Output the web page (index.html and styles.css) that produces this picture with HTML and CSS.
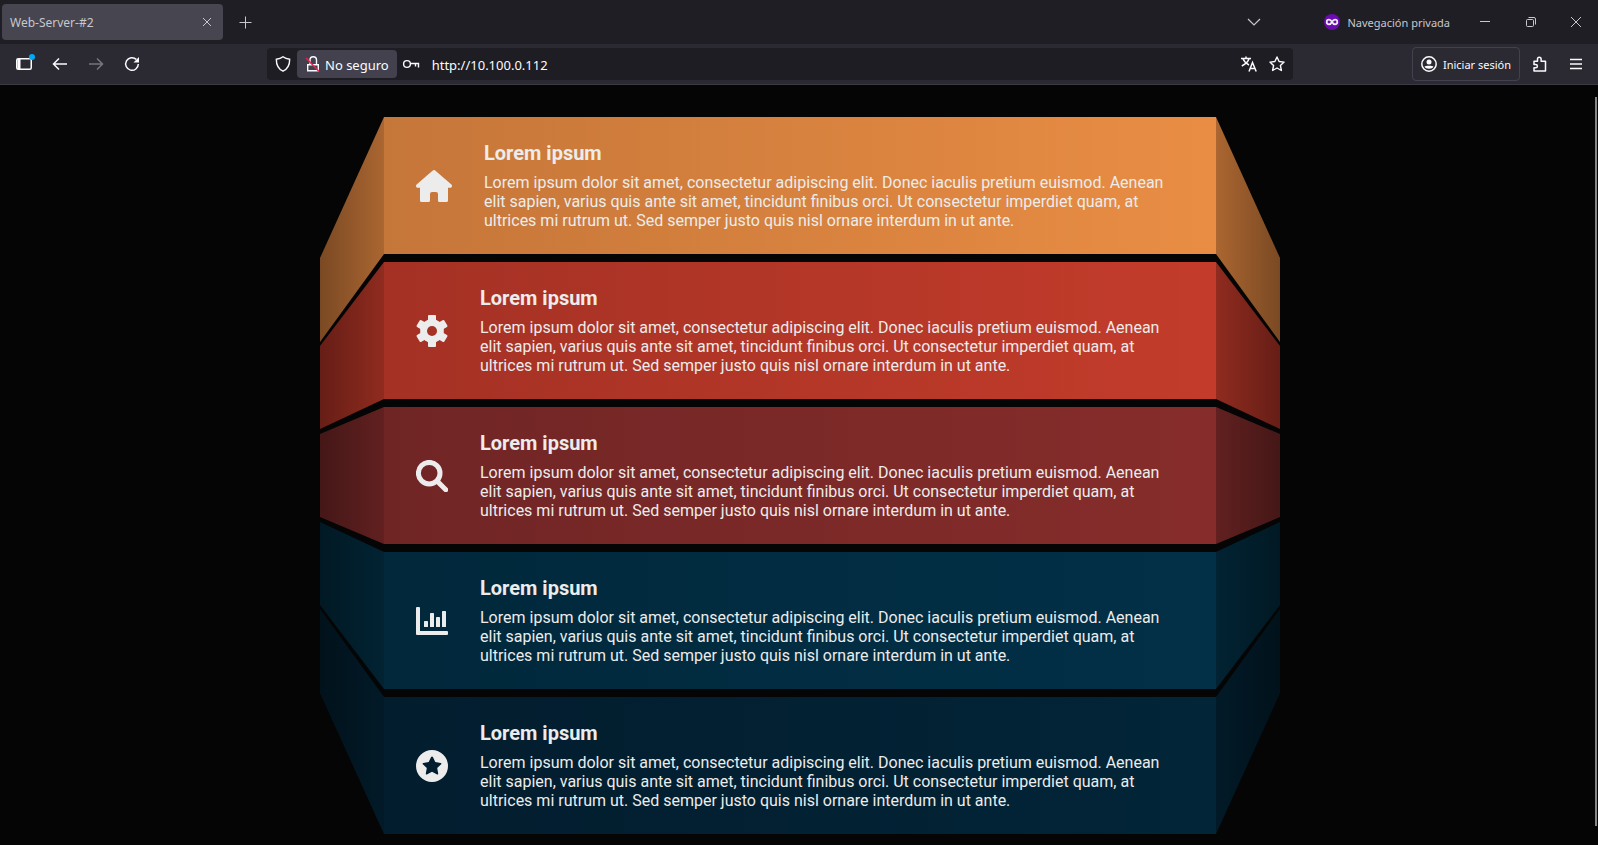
FILE: index.html
```html
<!DOCTYPE html>
<html lang="es">
<head>
<meta charset="utf-8">
<meta name="viewport" content="width=device-width, initial-scale=1">
<title>Web-Server-#2</title>
<link rel="stylesheet" href="styles.css">
</head>
<body>
<header class="browser">
  <div class="tabbar">
    <div class="tab">
      <span class="label">Web-Server-#2</span>
      <button class="plain tab-close" aria-label="Cerrar pestaña"><svg width="10" height="10" viewBox="0 0 10 10"><path d="M1 1l8 8M9 1l-8 8"/></svg></button>
    </div>
    <button class="plain tab-new" aria-label="Nueva pestaña"><svg width="13" height="13" viewBox="0 0 13 13"><path d="M6.500 .5v12M.5 6.500h12"/></svg></button>
    <button class="plain tab-list" aria-label="Lista de pestañas"><svg width="14" height="8" viewBox="0 0 14 8"><path d="M1 1l6 6 6-6" stroke-width="1.200"/></svg></button>
    <span class="private">
      <svg width="16" height="16" viewBox="0 0 16 16"><circle cx="8" cy="8" r="8" fill="#6a0cb0" stroke="none"/><path d="M8 8C7 6 6 5.700 5 5.700a2.300 2.300 0 0 0 0 4.600C6 10.300 7 10 8 8s2-2.300 3-2.300a2.300 2.300 0 0 1 0 4.600C10 10.300 9 10 8 8z" stroke="#eee" stroke-width="1.700"/></svg>
      <span class="label">Navegación privada</span>
    </span>
    <button class="plain win" aria-label="Minimizar"><svg width="10" height="10" viewBox="0 0 10 10"><path d="M0 4.500h10"/></svg></button>
    <button class="plain win" aria-label="Restaurar"><svg width="10" height="10" viewBox="0 0 10 10"><rect x=".5" y="2.500" width="7" height="7" rx="1"/><path d="M2.500 .5h5.500a1.500 1.500 0 0 1 1.500 1.500v5.500"/></svg></button>
    <button class="plain win win-close" aria-label="Cerrar"><svg width="10" height="10" viewBox="0 0 10 10"><path d="M0 0l10 10M10 0L0 10"/></svg></button>
  </div>
  <nav class="toolbar">
    <button class="plain tool" aria-label="Barra lateral"><svg width="20" height="20" viewBox="0 0 20 20" overflow="visible"><rect x="2.750" y="4.750" width="14.500" height="10.500" rx="1.500" stroke-width="1.500"/><path d="M3.500 5h3v10h-3z" fill="#fbfbfe" stroke="none"/><circle cx="18" cy="3" r="3" fill="#00a8f5" stroke="none"/></svg></button>
    <button class="plain tool" aria-label="Atrás"><svg width="16" height="16" viewBox="0 0 16 16"><path d="M15 8H1.500M7 2.500L1.500 8 7 13.500" stroke-width="1.500"/></svg></button>
    <button class="plain tool" aria-label="Adelante" disabled><svg width="16" height="16" viewBox="0 0 16 16"><path d="M1 8h13.500M9 2.500L14.500 8 9 13.500" stroke-width="1.500"/></svg></button>
    <button class="plain tool" aria-label="Recargar"><svg width="16" height="16" viewBox="0 0 16 16"><path d="M14.300 8A6.300 6.300 0 1 1 12.300 3.400" stroke-width="1.500"/><path d="M15 1v5.500H9.500z" fill="#fbfbfe" stroke="none"/></svg></button>
    <div class="urlbar">
      <svg class="shield" width="16" height="16" viewBox="0 0 16 16"><path d="M8 .8C6 2.400 4 3 1.300 3.300c0 5.700 1.700 9.700 6.700 11.900 5-2.200 6.700-6.200 6.700-11.900C12 3 10 2.400 8 .8z" stroke-width="1.400"/></svg>
      <button class="plain security"><svg width="16" height="16" viewBox="0 0 16 16"><path d="M2.700 8.700h10.600v6H2.700zM5 8.500V4a3 3 0 0 1 6.500 0v4.500" stroke-width="1.400"/><path d="M1 2l13 13.500" stroke="#e8214f" stroke-width="1.400"/></svg><span class="label">No seguro</span></button>
      <svg class="key" width="18" height="10" viewBox="0 0 18 10"><circle cx="5" cy="5" r="3.400" stroke-width="1.400"/><path d="M8.500 4.500h8v4M13.500 4.500v3" stroke-width="1.400"/></svg>
      <input class="address label" type="text" aria-label="Dirección" value="http://10.100.0.112">
      <button class="plain page-action" aria-label="Traducir"><svg width="16" height="16" viewBox="0 0 16 16"><path d="M0 2.500h10M5 .5v2M2 2.800c1.200 3 3.500 5 6 6.200M8 2.800C7 6 4 8.500 .8 10M8 15.500l3.500-9 3.700 9M9.300 12.500h4.600" stroke-width="1.500"/></svg></button>
      <button class="plain page-action" aria-label="Marcar"><svg width="16" height="16" viewBox="0 0 16 16"><path d="M8 1l2.100 4.500 5 .6-3.700 3.400 1 5L8 12l-4.400 2.500 1-5L.9 6.100l5-.6z" stroke-width="1.400" stroke-linejoin="round"/></svg></button>
    </div>
    <button class="plain account"><svg width="16" height="16" viewBox="0 0 16 16"><circle cx="8" cy="8" r="7.200" stroke-width="1.500"/><circle cx="8" cy="6" r="2.500" fill="#fbfbfe" stroke="none"/><path d="M3.500 10.500c.8-1 8.200-1 9 0C11.500 13.500 4.500 13.500 3.500 10.500z" fill="#fbfbfe" stroke="none"/></svg><span class="label">Iniciar sesión</span></button>
    <button class="plain tool" aria-label="Extensiones"><svg width="16" height="16" viewBox="0 0 16 16"><path d="M2 5.200h3.500V3a1.800 1.800 0 0 1 3.600 0v2.200H13.500V15H2v-3.200h1.700a1.600 1.600 0 0 0 0-3.300H2z" stroke-width="1.500" stroke-linejoin="round"/></svg></button>
    <button class="plain tool" aria-label="Menú"><svg width="12" height="12" viewBox="0 0 12 12"><path d="M0 1.500h12M0 6h12M0 10.500h12" stroke-width="1.300"/></svg></button>
  </nav>
</header>
<main class="page">
  <div class="scrollbar"></div>
  <div class="stack">
    <section class="card card-orange">
      <div class="side"></div>
      <div class="face">
        <svg class="icon" width="36" height="32" viewBox="0 0 36 32"><path d="M16.800 .5a1.800 1.800 0 0 1 2.400 0L35.400 14.500c1.200 1.100 .5 3.300-1.200 3.300H32V30.500a1.500 1.500 0 0 1-1.500 1.500H23.500a1.500 1.500 0 0 1-1.500-1.500V24a2 2 0 0 0-2-2h-4a2 2 0 0 0-2 2v6.500a1.500 1.500 0 0 1-1.500 1.500H5.500A1.500 1.500 0 0 1 4 30.500V17.800H1.800C.1 17.800-.6 15.600.6 14.500z"/></svg>
        <div><h3>Lorem ipsum</h3><p>Lorem ipsum dolor sit amet, consectetur adipiscing elit. Donec iaculis pretium euismod. Aenean elit sapien, varius quis ante sit amet, tincidunt finibus orci. Ut consectetur imperdiet quam, at ultrices mi rutrum ut. Sed semper justo quis nisl ornare interdum in ut ante.</p></div>
      </div>
      <div class="side side-right"></div>
    </section>
    <section class="card card-red">
      <div class="side"></div>
      <div class="face">
        <svg class="icon" width="32" height="32" viewBox="-16 -16 32 32"><mask id="hole"><rect x="-16" y="-16" width="32" height="32" fill="#fff"/><circle r="5" fill="#000"/></mask><g mask="url(#hole)"><circle r="11.800"/><path id="teeth" d="M-4-15q0-.8 1-1h6q1 .2 1 1v4l1 1v20l-1 1v4q0 .8-1 1h-6q-1-.2-1-1v-4l-1-1v-20l1-1z"/><use href="#teeth" transform="rotate(60)"/><use href="#teeth" transform="rotate(120)"/></g></svg>
        <div><h3>Lorem ipsum</h3><p>Lorem ipsum dolor sit amet, consectetur adipiscing elit. Donec iaculis pretium euismod. Aenean elit sapien, varius quis ante sit amet, tincidunt finibus orci. Ut consectetur imperdiet quam, at ultrices mi rutrum ut. Sed semper justo quis nisl ornare interdum in ut ante.</p></div>
      </div>
      <div class="side side-right"></div>
    </section>
    <section class="card card-wine">
      <div class="side"></div>
      <div class="face">
        <svg class="icon icon-line" width="32" height="32" viewBox="0 0 32 32"><circle cx="13.200" cy="13.200" r="10.800"/><path d="M21.500 21.500l8.300 8.300" stroke-linecap="round"/></svg>
        <div><h3>Lorem ipsum</h3><p>Lorem ipsum dolor sit amet, consectetur adipiscing elit. Donec iaculis pretium euismod. Aenean elit sapien, varius quis ante sit amet, tincidunt finibus orci. Ut consectetur imperdiet quam, at ultrices mi rutrum ut. Sed semper justo quis nisl ornare interdum in ut ante.</p></div>
      </div>
      <div class="side side-right"></div>
    </section>
    <section class="card card-blue">
      <div class="side"></div>
      <div class="face">
        <svg class="icon" width="32" height="28" viewBox="0 0 32 28"><path d="M1 0h2q1 0 1 1v23h27q1 0 1 1v2q0 1-1 1H1q-1 0-1-1V1Q0 0 1 0z"/><rect x="8" y="14" width="4" height="6" rx=".6"/><rect x="14" y="6" width="4" height="14" rx=".6"/><rect x="20" y="10" width="4" height="10" rx=".6"/><rect x="26" y="4" width="4" height="16" rx=".6"/></svg>
        <div><h3>Lorem ipsum</h3><p>Lorem ipsum dolor sit amet, consectetur adipiscing elit. Donec iaculis pretium euismod. Aenean elit sapien, varius quis ante sit amet, tincidunt finibus orci. Ut consectetur imperdiet quam, at ultrices mi rutrum ut. Sed semper justo quis nisl ornare interdum in ut ante.</p></div>
      </div>
      <div class="side side-right"></div>
    </section>
    <section class="card card-navy">
      <div class="side"></div>
      <div class="face">
        <svg class="icon" width="32" height="32" viewBox="0 0 32 32"><path fill-rule="evenodd" d="M16 0a16 16 0 1 0 0 32a16 16 0 0 0 0-32zM16 6.500q.6 0 .9.600l2.400 5 5.400.8q1.200.3.500 1.300l-4 3.900 1 5.500q.1 1.200-1.100.8L16 21.800l-5.100 2.600q-1.200.4-1.100-.8l1-5.500-4-3.900q-.7-1 .5-1.300l5.400-.8 2.400-5q.3-.6.9-.6z"/></svg>
        <div><h3>Lorem ipsum</h3><p>Lorem ipsum dolor sit amet, consectetur adipiscing elit. Donec iaculis pretium euismod. Aenean elit sapien, varius quis ante sit amet, tincidunt finibus orci. Ut consectetur imperdiet quam, at ultrices mi rutrum ut. Sed semper justo quis nisl ornare interdum in ut ante.</p></div>
      </div>
      <div class="side side-right"></div>
    </section>
  </div>
</main>
</body>
</html>
```
FILE: styles.css
```css
* { box-sizing: border-box; }

body {
  margin: 0;
  min-height: 100vh;
  display: flex;
  flex-direction: column;
  background: #050505;
  font-family: Roboto, sans-serif;
}

/* Browser frame */
.browser {
  color: #fbfbfe;
  font: 12px/16px "Noto Sans", sans-serif;
  border-bottom: 1px solid #3b3a44;
}
.browser svg { fill: none; stroke: currentColor; flex: none; }

.plain {
  display: flex;
  align-items: center;
  justify-content: center;
  padding: 0;
  border: 0;
  background: none;
  color: inherit;
  font: inherit;
}
.label { padding: 2px 0 0; }

.tabbar {
  display: flex;
  align-items: center;
  height: 44px;
  padding-left: 2px;
  background: #1f1e25;
  color: #c8c8cc;
}
.tab {
  display: flex;
  align-items: center;
  justify-content: space-between;
  width: 221px;
  height: 36px;
  padding: 0 4px 0 8px;
  border-radius: 4px;
  background: #464550;
}
.tab-close { width: 24px; height: 24px; }
.tab-new { width: 44px; height: 36px; }
.tab-list { width: 36px; height: 36px; margin-left: auto; margin-right: 52px; }
.private { display: flex; align-items: center; gap: 7px; margin-right: 12px; font-size: 11px; }
.win { width: 46px; height: 44px; }
.win-close { width: 44px; }

.toolbar {
  display: flex;
  align-items: center;
  height: 40px;
  padding: 0 4px 0 6px;
  background: #2b2a33;
}
.tool { width: 36px; height: 32px; }
.tool:disabled { color: #77767e; }

.urlbar {
  flex: 1;
  display: flex;
  align-items: center;
  height: 32px;
  margin: 0 119px 0 117px;
  padding: 0 2px 0 8px;
  border-radius: 4px;
  background: #1e1d24;
  font-size: 13px;
}
.security {
  gap: 4px;
  height: 28px;
  margin-left: 6px;
  padding: 0 8px;
  border-radius: 4px;
  background: #42414d;
}
.key { margin-left: 5px; }
.address {
  flex: 1;
  min-width: 0;
  margin-left: 12px;
  border: 0;
  outline: 0;
  background: none;
  color: inherit;
  font: inherit;
}
.page-action { width: 28px; height: 28px; }
.account {
  gap: 6px;
  height: 34px;
  padding: 0 8px;
  margin-right: 2px;
  border: 1px solid #42414d;
  border-radius: 4px;
  font-size: 11px;
}

/* Page */
.page {
  flex: 1;
  position: relative;
  padding: 32px 0 8px 2px;
}
.scrollbar {
  position: absolute;
  top: 12px;
  right: 1px;
  bottom: 19px;
  width: 2px;
  background: #858585;
}
.stack {
  display: grid;
  gap: 8px;
  max-width: 960px;
  margin: 0 auto;
}
.card {
  display: grid;
  grid-template-columns: 64px 1fr 64px;
}
.face {
  display: flex;
  align-items: center;
  gap: 32px;
  padding: 24px 32px;
  background: linear-gradient(to right, var(--from), var(--to));
  color: #ececec;
}
.icon { flex: none; fill: #ececec; }
.icon-line { fill: none; stroke: #ececec; stroke-width: 5; }
.face h3 { margin: 0 0 8px; font-size: 20px; line-height: 24px; font-weight: 700; }
.face p { margin: 0; font-size: 16px; line-height: 19px; }

/* Folded sides: --above and --below extend the box past the face,
   --top and --bottom place the outer edge inside it. */
.side {
  margin-top: calc(-1 * var(--above));
  margin-bottom: calc(-1 * var(--below));
  background: linear-gradient(to left, var(--near), var(--far));
  clip-path: polygon(100% var(--above), 100% calc(100% - var(--below)), 0 calc(100% - var(--bottom)), 0 var(--top));
}
.side-right { transform: scaleX(-1); }

.card-orange {
  --from: #c57639; --to: #e98d44; --near: #ab6631; --far: #7a4923;
  --above: 0px; --below: 88px; --top: 141px; --bottom: 0px;
}
.card-red {
  --from: #a43124; --to: #c33c2b; --near: #902b1f; --far: #661e16;
  --above: 0px; --below: 30px; --top: 84px; --bottom: 0px;
}
.card-wine {
  --from: #702525; --to: #862d2b; --near: #622020; --far: #451717;
  --above: 0px; --below: 0px; --top: 27px; --bottom: 27px;
}
.card-blue {
  --from: #01283b; --to: #023047; --near: #022333; --far: #011924;
  --above: 30px; --below: 0px; --top: 0px; --bottom: 84px;
}
.card-navy {
  --from: #021d2e; --to: #022538; --near: #021a28; --far: #01121b;
  --above: 88px; --below: 0px; --top: 0px; --bottom: 141px;
}
```
